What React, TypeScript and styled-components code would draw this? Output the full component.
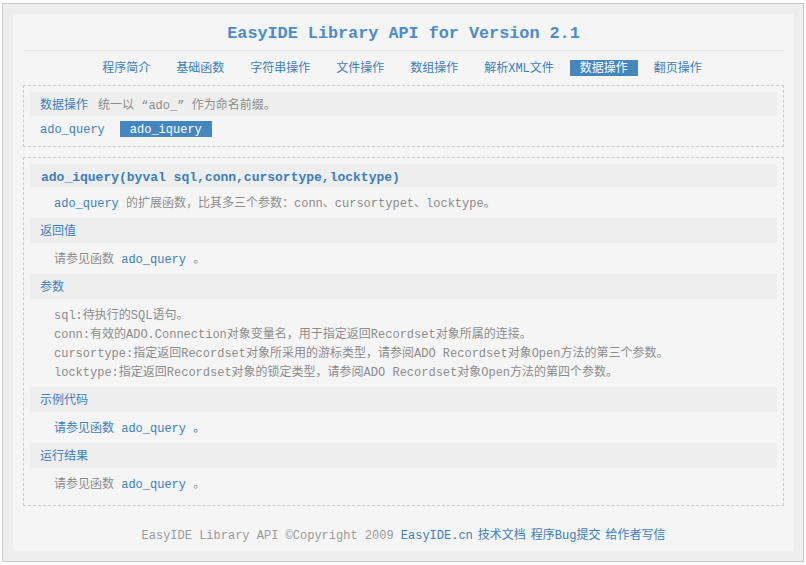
import React from 'react';
import styled, { createGlobalStyle } from 'styled-components';

const GlobalStyle = createGlobalStyle`
  html, body {
    margin: 0;
    padding: 0;
    background: #ffffff;
  }
  body {
    font-family: "Liberation Mono", "Noto Sans CJK SC", monospace;
    font-size: 12px;
  }
`;

const BLUE = '#3b7fbb';
const GRAY = '#8c8c8c';

const Frame = styled.div`
  margin: 3px 2px;
  height: 537px;
  border: 1px solid #c9c9c9;
  background: #eeeeee;
  padding: 10px 9px 10px 10px;
`;

const Panel = styled.div`
  height: 100%;
  background: #f5f5f5;
  padding: 0 10px;
  display: flex;
  flex-direction: column;
`;

// line-height a little taller than the box: pushes glyphs down to where they sit in the original
const Title = styled.h1`
  margin: 0;
  height: 36px;
  line-height: 40px;
  border-bottom: 1px solid #e7e7e7;
  text-align: center;
  font-family: "Liberation Mono", monospace;
  font-weight: bold;
  font-size: 16.8px;
  color: #4a8ccb;
`;

const Nav = styled.nav`
  display: flex;
  justify-content: center;
  gap: 6px;
  margin: 9px 0 9px;
  padding-right: 3px;
`;

const Tab = styled.a<{ $active?: boolean }>`
  display: block;
  height: 16px;
  line-height: 18px;
  padding: 0 10px;
  color: ${({ $active }) => ($active ? '#ffffff' : BLUE)};
  background: ${({ $active }) => ($active ? '#4487bf' : 'transparent')};
  text-decoration: none;
  cursor: pointer;
`;

const DashedBox = styled.section<{ $bottom?: number }>`
  border: 1px dashed #cccccc;
  padding: 6px 6px ${({ $bottom }) => $bottom ?? 9}px;
  & + & {
    margin-top: 10px;
  }
`;

const Bar = styled.div<{ $height?: number }>`
  height: ${({ $height }) => $height ?? 25}px;
  line-height: ${({ $height }) => ($height ?? 25) + 4}px;
  background: #eeeeee;
  padding: 0 10px;
  color: ${BLUE};
  display: flex;
  gap: 10px;
`;

const BarNote = styled.span`
  color: ${GRAY};
`;

const FuncTitle = styled.span`
  font-weight: bold;
  font-size: 13px;
  padding-left: 1px;
  color: #3a7ebe;
`;

const LinkRow = styled.div`
  display: flex;
  gap: 5px;
  margin-top: 5px;
`;

const Para = styled.div<{ $blue?: boolean }>`
  padding: 8px 24px 4px;
  line-height: 19px;
  color: ${({ $blue }) => ($blue ? BLUE : GRAY)};
  white-space: pre;
`;

const Code = styled.span`
  color: ${BLUE};
`;

const Footer = styled.footer`
  padding: 22px 0 8px;
  line-height: 16px;
  text-align: center;
  color: #9a9a9a;
  white-space: pre;
`;

const FootLink = styled.a`
  color: ${BLUE};
  text-decoration: none;
  margin-left: 5px;
  &:first-child {
    margin-left: 0;
  }
`;

const tabs = ['程序简介', '基础函数', '字符串操作', '文件操作', '数组操作', '解析XML文件', '数据操作', '翻页操作'];

export default function App() {
  return (
    <>
      <GlobalStyle />
      <Frame>
        <Panel>
          <Title>EasyIDE Library API for Version 2.1</Title>
          <Nav>
            {tabs.map((t) => (
              <Tab key={t} $active={t === '数据操作'}>
                {t}
              </Tab>
            ))}
          </Nav>

          <DashedBox>
            <Bar $height={24}>
              <span>数据操作</span>
              <BarNote>统一以 “ado_” 作为命名前缀。</BarNote>
            </Bar>
            <LinkRow>
              <Tab>ado_query</Tab>
              <Tab $active>ado_iquery</Tab>
            </LinkRow>
          </DashedBox>

          <DashedBox $bottom={6}>
            <Bar $height={23}>
              <FuncTitle>ado_iquery(byval sql,conn,cursortype,locktype)</FuncTitle>
            </Bar>
            <Para>
              <Code>ado_query</Code> 的扩展函数，比其多三个参数：conn、cursortypet、locktype。
            </Para>

            <Bar>返回值</Bar>
            <Para>
              请参见函数 <Code>ado_query</Code> 。
            </Para>

            <Bar>参数</Bar>
            <Para>
              {'sql:待执行的SQL语句。\n'}
              {'conn:有效的ADO.Connection对象变量名，用于指定返回Recordset对象所属的连接。\n'}
              {'cursortype:指定返回Recordset对象所采用的游标类型，请参阅ADO Recordset对象Open方法的第三个参数。\n'}
              {'locktype:指定返回Recordset对象的锁定类型，请参阅ADO Recordset对象Open方法的第四个参数。'}
            </Para>

            <Bar>示例代码</Bar>
            <Para $blue>
              请参见函数 <Code>ado_query</Code> 。
            </Para>

            <Bar>运行结果</Bar>
            <Para>
              请参见函数 <Code>ado_query</Code> 。
            </Para>
          </DashedBox>

          <Footer>
            {'EasyIDE Library API ©Copyright 2009 '}
            <FootLink>EasyIDE.cn</FootLink>
            <FootLink>技术文档</FootLink>
            <FootLink>程序Bug提交</FootLink>
            <FootLink>给作者写信</FootLink>
          </Footer>
        </Panel>
      </Frame>
    </>
  );
}
